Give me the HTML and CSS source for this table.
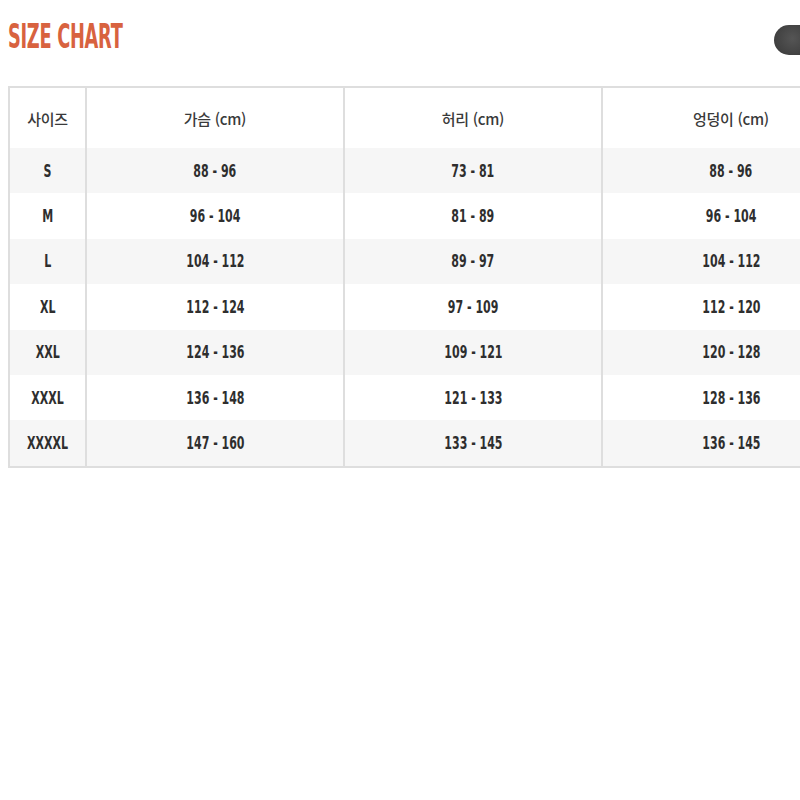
FILE: index.html
```html
<!DOCTYPE html>
<html lang="ko">
<head>
<meta charset="utf-8">
<title>Size Chart</title>
<link rel="stylesheet" href="styles.css">
</head>
<body>
<div class="page">
  <header class="top">
    <h1 class="title">SIZE CHART</h1>
    <span class="pill"></span>
  </header>
  <table class="chart">
    <colgroup>
      <col class="c-size"><col class="c-val"><col class="c-val"><col class="c-val">
    </colgroup>
    <thead>
      <tr><th>사이즈</th><th>가슴 (cm)</th><th>허리 (cm)</th><th>엉덩이 (cm)</th></tr>
    </thead>
    <tbody>
      <tr><td><span class="n">S</span></td><td><span class="n">88 - 96</span></td><td><span class="n">73 - 81</span></td><td><span class="n">88 - 96</span></td></tr>
      <tr><td><span class="n">M</span></td><td><span class="n">96 - 104</span></td><td><span class="n">81 - 89</span></td><td><span class="n">96 - 104</span></td></tr>
      <tr><td><span class="n">L</span></td><td><span class="n">104 - 112</span></td><td><span class="n">89 - 97</span></td><td><span class="n">104 - 112</span></td></tr>
      <tr><td><span class="n">XL</span></td><td><span class="n">112 - 124</span></td><td><span class="n">97 - 109</span></td><td><span class="n">112 - 120</span></td></tr>
      <tr><td><span class="n">XXL</span></td><td><span class="n">124 - 136</span></td><td><span class="n">109 - 121</span></td><td><span class="n">120 - 128</span></td></tr>
      <tr><td><span class="n">XXXL</span></td><td><span class="n">136 - 148</span></td><td><span class="n">121 - 133</span></td><td><span class="n">128 - 136</span></td></tr>
      <tr><td><span class="n">XXXXL</span></td><td><span class="n">147 - 160</span></td><td><span class="n">133 - 145</span></td><td><span class="n">136 - 145</span></td></tr>
    </tbody>
  </table>
</div>
</body>
</html>
```
FILE: styles.css
```css
html, body {
  margin: 0;
  padding: 0;
  background: #ffffff;
  overflow: hidden;
}
.page {
  width: 800px;
  height: 800px;
  overflow: hidden;
  padding: 0 0 0 8px;
  box-sizing: border-box;
}
.top {
  display: flex;
  justify-content: space-between;
  align-items: center;
  height: 86px;
  position: relative;
}
.title {
  margin: 0;
  font-family: "DejaVu Sans Condensed", "Liberation Sans", sans-serif;
  font-weight: 700;
  font-size: 33px;
  color: #d8623f;
  letter-spacing: -0.5px;
  transform: scaleX(0.6);
  transform-origin: left center;
  margin-top: -14px;
  white-space: nowrap;
}
.pill {
  position: absolute;
  right: -20px;
  top: 25px;
  width: 46px;
  height: 30px;
  border-radius: 15px;
  background: radial-gradient(circle at 40% 45%, #555 0%, #3a3a3a 70%, #333 100%);
}
.chart {
  border-collapse: collapse;
  table-layout: fixed;
  width: 852px;
  border: 2px solid #dedede;
}
.c-size { width: 77px; }
.c-val { width: 258px; }
.chart th,
.chart td {
  border-left: 2px solid #dedede;
  border-right: 2px solid #dedede;
  text-align: center;
  padding: 0;
  color: #333;
}
.chart th {
  height: 60px;
  font-family: "Noto Sans CJK KR", "Noto Sans", sans-serif;
  font-weight: 500;
  font-size: 15px;
  letter-spacing: -0.3px;
  color: #3a3a3a;
}
.chart td {
  height: 45.4px;
  font-family: "DejaVu Sans Condensed", "Liberation Sans", sans-serif;
  font-weight: 700;
  font-size: 17px;
}
.n {
  display: inline-block;
  transform: scaleX(0.72);
  white-space: nowrap;
  color: #2e2e2e;
}
.chart tbody tr:nth-child(odd) td {
  background: #f6f6f6;
}
```
